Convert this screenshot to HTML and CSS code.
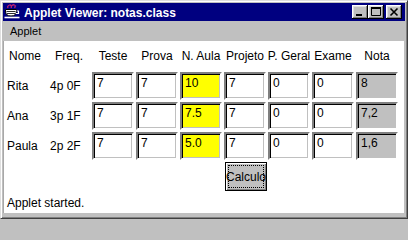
FILE: index.html
```html
<!DOCTYPE html>
<html>
<head>
<meta charset="utf-8">
<link rel="stylesheet" href="styles.css">
</head>
<body>
<div class="window">
  <div class="titlebar">
    <svg class="appicon" viewBox="0 0 16 16" width="16" height="16">
      <path d="M4 4 q-1 -2 1.5 -3 q1.5 -0.6 1 1 M7.5 4 q-1 -2 1.5 -3.2 q1.5 -0.6 1 1 M11 4 q-0.5 -1.5 1 -2.5" stroke="#c02070" fill="none" stroke-width="1.3"/>
      <path d="M1.5 5.5 h11 v1.5 q0 5 -5.5 5 q-5.5 0 -5.5 -5z" fill="#fff" stroke="#000" stroke-width="1"/>
      <path d="M12.5 7 h2 v2.5 h-2.5" stroke="#fff" fill="none" stroke-width="1.2"/>
      <path d="M2.5 7.5h9 M3 9.5h8" stroke="#303030" stroke-width="1"/>
      <path d="M0.5 13.5 h15" stroke="#fff" stroke-width="1.6"/>
    </svg>
    <span class="title">Applet Viewer: notas.class</span>
    <div class="winbtns">
      <span class="wbtn"><svg viewBox="0 0 16 14" width="16" height="14"><rect x="4" y="9" width="6" height="2" fill="#000"/></svg></span>
      <span class="wbtn"><svg viewBox="0 0 16 14" width="16" height="14"><path d="M3.5 2.5h9v8h-9z" fill="none" stroke="#000"/><rect x="3" y="2" width="10" height="2" fill="#000"/></svg></span>
      <span class="wbtn wclose"><svg viewBox="0 0 16 14" width="16" height="14"><path d="M4.5 3.5l7 7M11.5 3.5l-7 7" stroke="#000" stroke-width="1.6"/></svg></span>
    </div>
  </div>
  <div class="menubar"><span class="menu">Applet</span></div>
  <div class="content">
    <div class="grid">
      <div class="hd">Nome</div>
      <div class="hd">Freq.</div>
      <div class="hd">Teste</div>
      <div class="hd">Prova</div>
      <div class="hd">N. Aula</div>
      <div class="hd">Projeto</div>
      <div class="hd">P. Geral</div>
      <div class="hd">Exame</div>
      <div class="hd">Nota</div>

      <div class="lbl name">Rita</div>
      <div class="lbl freq">4p 0F</div>
      <div class="field">7</div>
      <div class="field">7</div>
      <div class="field yellow">10</div>
      <div class="field">7</div>
      <div class="field">0</div>
      <div class="field">0</div>
      <div class="field gray">8</div>

      <div class="lbl name">Ana</div>
      <div class="lbl freq">3p 1F</div>
      <div class="field">7</div>
      <div class="field">7</div>
      <div class="field yellow">7.5</div>
      <div class="field">7</div>
      <div class="field">0</div>
      <div class="field">0</div>
      <div class="field gray">7,2</div>

      <div class="lbl name">Paula</div>
      <div class="lbl freq">2p 2F</div>
      <div class="field">7</div>
      <div class="field">7</div>
      <div class="field yellow">5.0</div>
      <div class="field">7</div>
      <div class="field">0</div>
      <div class="field">0</div>
      <div class="field gray">1,6</div>

      <div class="btncell"><button class="btn">Calculo</button></div>
    </div>
    <div class="status">Applet started.</div>
  </div>
</div>
</body>
</html>
```
FILE: styles.css
```css
html, body {
  margin: 0;
  padding: 0;
}
body {
  width: 408px;
  height: 219px;
  overflow: hidden;
  background: #c0c0c0;
  font-family: "Liberation Sans", Arial, sans-serif;
  font-size: 12px;
  color: #000;
}
.window {
  box-sizing: border-box;
  width: 408px;
  height: 219px;
  display: flex;
  flex-direction: column;
  background: #c0c0c0;
  border-top: 1px solid #dfdfdf;
  border-left: 1px solid #dfdfdf;
  border-right: 1px solid #404040;
  border-bottom: 1px solid #404040;
  box-shadow: inset 1px 1px #ffffff, inset -1px -1px #808080;
  padding: 2px;
}
.titlebar {
  height: 18px;
  background: #000080;
  display: flex;
  align-items: center;
  padding: 0 3px 0 1px;
  flex: none;
}
.appicon {
  flex: none;
  display: block;
}
.title {
  margin-left: 4px;
  color: #fff;
  font-weight: bold;
  font-size: 12px;
  line-height: 18px;
  padding-top: 1px;
  white-space: nowrap;
  flex: 1;
}
.winbtns {
  display: flex;
  flex: none;
}
.wbtn {
  display: block;
  width: 16px;
  height: 14px;
  background: #c0c0c0;
  box-sizing: border-box;
  box-shadow: inset -1px -1px #000, inset 1px 1px #fff, inset -2px -2px #808080, inset 2px 2px #dfdfdf;
}
.wbtn svg {
  display: block;
}
.wclose {
  margin-left: 2px;
}
.menubar {
  height: 20px;
  flex: none;
  box-sizing: border-box;
  padding: 3px 0 0 7px;
  font-size: 11px;
  line-height: 15px;
}
.content {
  flex: 1;
  background: #fff;
  margin: 0 1px 3px 0;
  border-left: 1px solid #a8a8a8;
  padding-top: 1px;
}
.grid {
  display: grid;
  grid-template-columns: repeat(9, 42px);
  grid-auto-rows: 28px;
  column-gap: 2px;
  row-gap: 2px;
}
.hd {
  display: flex;
  align-items: center;
  justify-content: center;
  white-space: nowrap;
  line-height: 14px;
}
.lbl {
  display: flex;
  align-items: center;
  white-space: nowrap;
  line-height: 14px;
}
.name {
  padding-left: 3px;
}
.freq {
  padding-left: 2px;
}
.field {
  box-sizing: border-box;
  border: 2px solid;
  border-color: #808080 #ffffff #ffffff #808080;
  box-shadow: inset 1px 1px #000000, inset -1px -1px #c0c0c0;
  padding: 2px 3px 0 3px;
  line-height: 14px;
  background: #fff;
  overflow: hidden;
  white-space: nowrap;
}
.yellow {
  background: #ffff00;
}
.gray {
  background: #c0c0c0;
}
.btncell {
  grid-column: 6;
  display: flex;
  padding-left: 1px;
}
.btn {
  box-sizing: border-box;
  width: 42px;
  height: 29px;
  margin: 0;
  padding: 0;
  background: #c0c0c0;
  border: 1px solid #000;
  box-shadow: inset 1px 1px #fff, inset -1px -1px #808080;
  font-family: "Liberation Sans", Arial, sans-serif;
  font-size: 12px;
  color: #000;
  display: flex;
  align-items: center;
  justify-content: center;
  white-space: nowrap;
  overflow: visible;
  outline: 1px dotted #000;
  outline-offset: -4px;
}
.status {
  margin-top: 6px;
  padding-left: 3px;
  line-height: 14px;
}
```
